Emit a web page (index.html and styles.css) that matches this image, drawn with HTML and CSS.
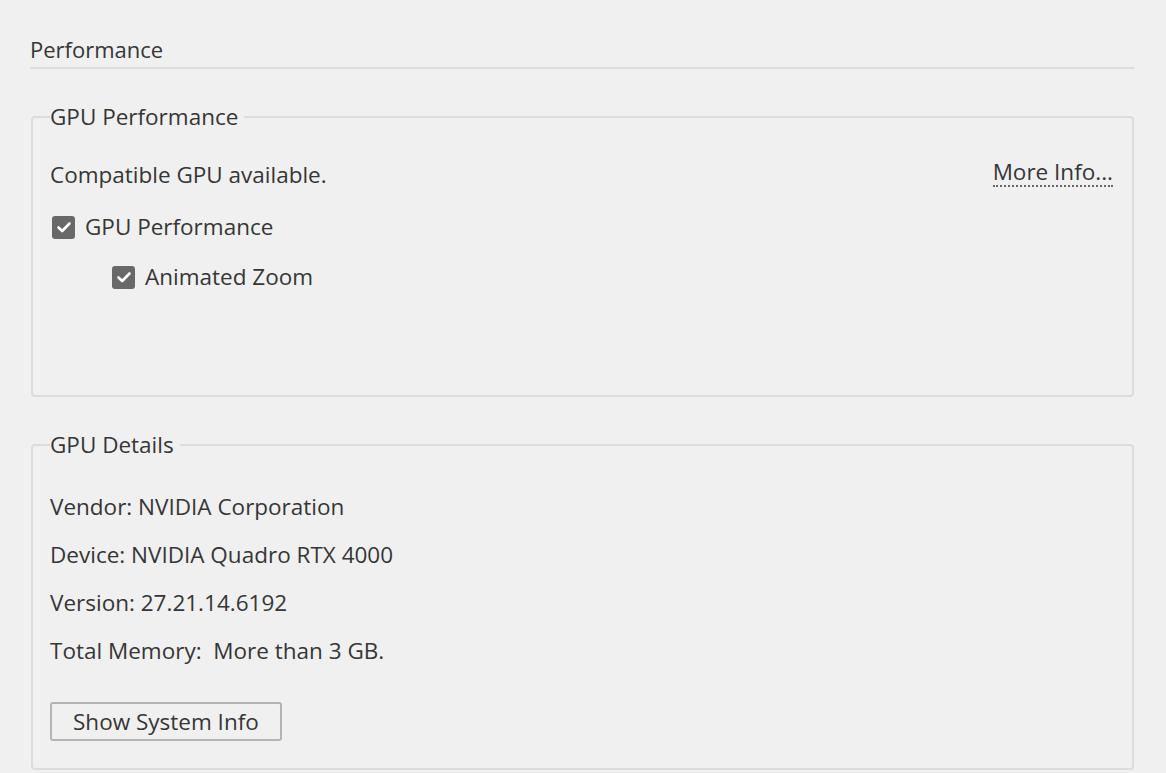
FILE: index.html
```html
<!DOCTYPE html>
<html>
<head>
<meta charset="utf-8">
<link rel="stylesheet" href="styles.css">
</head>
<body>
<div class="page">
  <div class="title">Performance</div>
  <fieldset class="group group-perf">
    <legend>GPU Performance</legend>
    <div class="row-top">
      <span class="text">Compatible GPU available.</span>
      <span class="more">More Info...</span>
    </div>
    <label class="check">
      <span class="box"><svg viewBox="0 0 22 22" width="22" height="22"><path d="M5.5 11.5 L9.2 15 L16.5 7.5" fill="none" stroke="#fff" stroke-width="2.6" stroke-linecap="round" stroke-linejoin="round"/></svg></span>
      <span class="text">GPU Performance</span>
    </label>
    <label class="check sub">
      <span class="box"><svg viewBox="0 0 22 22" width="22" height="22"><path d="M5.5 11.5 L9.2 15 L16.5 7.5" fill="none" stroke="#fff" stroke-width="2.6" stroke-linecap="round" stroke-linejoin="round"/></svg></span>
      <span class="text">Animated Zoom</span>
    </label>
  </fieldset>
  <fieldset class="group group-details">
    <legend>GPU Details</legend>
    <div class="line">Vendor: NVIDIA Corporation</div>
    <div class="line">Device: NVIDIA Quadro RTX 4000</div>
    <div class="line">Version: 27.21.14.6192</div>
    <div class="line">Total Memory:&nbsp; More than 3 GB.</div>
    <button class="btn">Show System Info</button>
  </fieldset>
</div>
</body>
</html>
```
FILE: styles.css
```css
html, body {
  margin: 0;
  padding: 0;
  background: #f0f0f0;
}
body {
  font-family: "Open Sans", "Noto Sans", sans-serif;
  font-size: 22.5px;
  color: #363636;
  width: 1166px;
  height: 773px;
  overflow: hidden;
}
.page {
  padding: 33px 32px 0 30px;
}
.title {
  font-size: 22px;
  line-height: 32px;
  padding-bottom: 2px;
  border-bottom: 2px solid #dcdcdc;
  margin-bottom: 33px;
}
.group {
  margin: 0 0 0 1px;
  border: 2px solid #dcdcdc;
  border-radius: 4px;
  padding: 0 19px 0 17px;
}
.group legend {
  padding: 0 6px 0 0;
  margin-left: 0;
  line-height: 30px;
}
.group-perf {
  height: 295px;
  box-sizing: border-box;
  margin-bottom: 33px;
}
.row-top {
  display: flex;
  justify-content: space-between;
  align-items: center;
  margin-top: 28px;
  line-height: 30px;
}
.more {
  border-bottom: 2px dotted #666;
  line-height: 26px;
  margin-top: -4px;
}
.check {
  display: flex;
  align-items: center;
  gap: 10px;
  margin-top: 22px;
  margin-left: 2px;
  line-height: 30px;
}
.check.sub {
  margin-left: 62px;
  margin-top: 20px;
}
.box {
  width: 23px;
  height: 23px;
  border-radius: 3px;
  background: #686868;
  display: flex;
  align-items: center;
  justify-content: center;
}
.box svg {
  display: block;
}
.group-details {
  height: 340px;
  box-sizing: border-box;
  padding-top: 32px;
}
.line {
  line-height: 30px;
  margin-bottom: 18px;
}
.btn {
  font: inherit;
  color: inherit;
  background: #f0f0f0;
  border: 2px solid #b4b4b4;
  border-radius: 3px;
  height: 39px;
  padding: 0 21px;
  margin-top: 18px;
  line-height: 33px;
}
```
